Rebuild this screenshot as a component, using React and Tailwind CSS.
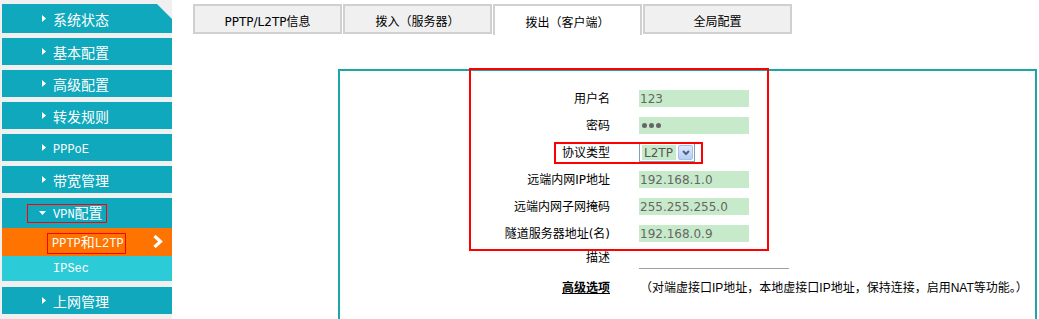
import React from "react";

function RightArrow() {
  return (
    <svg width="4" height="7" viewBox="0 0 4 7" className="shrink-0">
      <path d="M0 0L4 3.5L0 7Z" fill="white" />
    </svg>
  );
}
function DownArrow() {
  return (
    <svg width="7" height="4" viewBox="0 0 7 4" className="shrink-0">
      <path d="M0 0H7L3.5 4Z" fill="white" />
    </svg>
  );
}

const lat = "[font-family:'Liberation_Mono',monospace] text-[12px]";

function NavItem({ children, first }) {
  return (
    <div
      className={`relative w-[170px] bg-[#0fa8bc] flex items-center pl-[40px] text-white ${
        first ? "h-[29px]" : "h-[27px] mt-[5px]"
      }`}
    >
      <RightArrow />
      <span className="ml-[7px] text-[14px] leading-none">{children}</span>
      {first && (
        <svg className="absolute right-0 top-0" width="15" height="15" viewBox="0 0 15 15">
          <path d="M0 0H15V15Z" fill="#f0f0f0" />
        </svg>
      )}
    </div>
  );
}

function Tab({ children, active }) {
  return (
    <div
      className={`w-[149px] flex items-center justify-center pt-[5px] text-[12px] text-black border-2 border-[#d0d0d0] ${
        active ? "bg-white border-b-0 h-[31px]" : "bg-[#f0f0f0] h-[30px]"
      }`}
    >
      {children}
    </div>
  );
}

function Row({ label, children, extra }) {
  return (
    <div className="relative flex items-center h-[27px]">
      <div className="w-[139px] text-right text-[12px] leading-[14px] text-black whitespace-nowrap">{label}</div>
      <div className="ml-[29px]">{children}</div>
      {extra}
    </div>
  );
}

function Field({ children }) {
  return (
    <div className="w-[110px] h-[17px] bg-[#c7ebca] pl-[1px] flex items-center text-[12px] leading-none text-[#666] [font-family:'DejaVu_Sans',sans-serif]">
      {children}
    </div>
  );
}

export default function App() {
  return (
    <div className="flex w-[1039px] h-[319px] overflow-hidden bg-white [font-family:'Noto_Sans_CJK_SC',sans-serif]">
      {/* Sidebar */}
      <div className="w-[172px] shrink-0 bg-[#f0f0f0] pl-[2px] pt-[4px] h-full">
        <NavItem first>系统状态</NavItem>
        <NavItem>基本配置</NavItem>
        <NavItem>高级配置</NavItem>
        <NavItem>转发规则</NavItem>
        <NavItem>
          <span className={lat}>PPPoE</span>
        </NavItem>
        <NavItem>带宽管理</NavItem>
        <div className="relative mt-[5px] w-[170px] h-[30px] bg-[#0fa8bc] flex items-center pl-[37px] text-white">
          <DownArrow />
          <span className="ml-[7px] text-[14px] leading-none">
            <span className={lat}>VPN</span>配置
          </span>
          <div className="absolute left-[25px] top-[6px] w-[80px] h-[19px] border border-[#ff0000]" />
        </div>
        <div className="relative w-[170px] h-[28px] bg-[#ff7300] flex items-center pl-[50px] text-white">
          <span className="text-[14px] leading-none">
            <span className={lat}>PPTP</span>和<span className={lat}>L2TP</span>
          </span>
          <div className="absolute left-[45px] top-[5px] w-[79px] h-[21px] border border-[#ff0000]" />
          <svg className="absolute right-[9px] top-[7px]" width="10" height="13" viewBox="0 0 10 13">
            <path d="M1.5 1L7.5 6.5L1.5 12" stroke="white" strokeWidth="3.2" fill="none" />
          </svg>
        </div>
        <div className="w-[170px] h-[25px] bg-[#2bccd8] flex items-center pl-[51px] text-white">
          <span className={lat}>IPSec</span>
        </div>
        <div className="relative mt-[6px] w-[170px] h-[27px] bg-[#0fa8bc] flex items-center pl-[40px] text-white">
          <RightArrow />
          <span className="ml-[7px] text-[14px] leading-none">上网管理</span>
        </div>
      </div>

      {/* Main */}
      <div className="flex-1 flex flex-col [font-family:'DejaVu_Sans','Noto_Sans_CJK_SC',sans-serif]">
        <div className="ml-[21px] mt-[4px] flex items-start gap-[1px] h-[30px]">
          <Tab>PPTP/L2TP信息</Tab>
          <Tab>拨入（服务器）</Tab>
          <Tab active>拨出（客户端）</Tab>
          <Tab>全局配置</Tab>
        </div>

        <div className="ml-[166px] mt-[35px] w-[699px] h-[300px] shrink-0 border-2 border-[#19a8a8]">
          <div className="-mt-[3px] ml-[129px] w-[300px] border-2 border-[#ff0000] pt-[15px] pb-[2px]">
            <Row label="用户名">
              <Field>123</Field>
            </Row>
            <Row label="密码">
              <Field>
                <div className="flex gap-[2px] ml-[2px]">
                  <div className="w-[5px] h-[5px] rounded-full bg-[#666]" />
                  <div className="w-[5px] h-[5px] rounded-full bg-[#666]" />
                  <div className="w-[5px] h-[5px] rounded-full bg-[#666]" />
                </div>
              </Field>
            </Row>
            <Row
              label="协议类型"
              extra={<div className="absolute left-[83px] top-[3px] w-[149px] h-[22px] border-2 border-[#ff0000]" />}
            >
              <div className="w-[56px] h-[19px] border border-[#7f9db9] bg-white flex items-center pl-[2px]">
                <div className="w-[34px] h-[15px] bg-[#c7ebca] flex items-center pl-[2px] text-[12px] leading-none text-[#555]">
                  L2TP
                </div>
                <div className="ml-[2px] w-[15px] h-[15px] rounded-[2px] border border-[#a9bfe6] bg-gradient-to-b from-[#e0eafc] to-[#b7cdf4] flex items-center justify-center">
                  <svg width="8" height="6" viewBox="0 0 8 6">
                    <path d="M1 1L4 4L7 1" stroke="#4d6185" strokeWidth="2" fill="none" />
                  </svg>
                </div>
              </div>
            </Row>
            <Row label="远端内网IP地址">
              <Field>192.168.1.0</Field>
            </Row>
            <Row label="远端内网子网掩码">
              <Field>255.255.255.0</Field>
            </Row>
            <Row label="隧道服务器地址(名)">
              <Field>192.168.0.9</Field>
            </Row>
          </div>

          <div className="ml-[131px] flex items-start">
            <div className="w-[139px] text-right text-[12px] leading-[14px] text-black">描述</div>
            <div className="ml-[29px] w-[150px] h-[18px] border-b border-[#a0a0a0]" />
          </div>

          <div className="ml-[131px] mt-[12px] flex items-start">
            <div className="w-[139px] text-right text-[12px] leading-[14px] text-black font-bold">
              <span className="underline">高级选项</span>
            </div>
            <div className="ml-[30px] text-[12px] leading-[14px] text-black whitespace-nowrap [font-family:'Liberation_Sans','Noto_Sans_CJK_SC',sans-serif]">
              （对端虚接口IP地址，本地虚接口IP地址，保持连接，启用NAT等功能。）
            </div>
          </div>
        </div>
      </div>
    </div>
  );
}
